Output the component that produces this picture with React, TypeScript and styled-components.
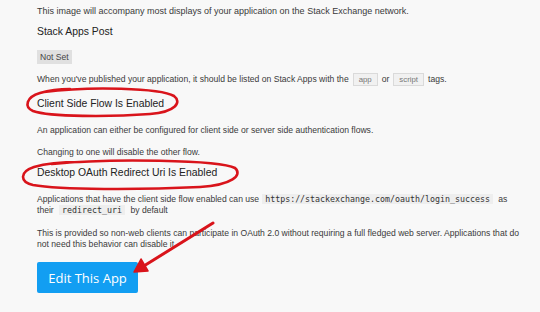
import styled, { createGlobalStyle } from "styled-components";

const Global = createGlobalStyle`
  html, body {
    margin: 0;
    padding: 0;
    background: #f8f8f8;
  }
  body {
    font-family: "Liberation Sans", Arial, sans-serif;
    color: #3a3a3a;
  }
`;

const Page = styled.div`
  position: relative;
  width: 540px;
  height: 312px;
  overflow: hidden;
  box-sizing: border-box;
  padding: 5px 0 0 37px;
`;

const Text = styled.p<{ $gap: number; $lh?: number; $size?: number }>`
  margin: ${(p) => p.$gap}px 0 0;
  font-size: ${(p) => p.$size ?? 8.6}px;
  line-height: ${(p) => p.$lh ?? 12}px;
  white-space: nowrap;
`;

const Heading = styled.h3<{ $gap: number }>`
  margin: ${(p) => p.$gap}px 0 0;
  font-size: 10.4px;
  line-height: 14px;
  font-weight: normal;
  color: #222;
`;

const Badge = styled.div`
  display: inline-block;
  margin-top: 11px;
  height: 14px;
  line-height: 14px;
  padding: 0 3px;
  font-size: 8.6px;
  color: #444;
  background: #e0e0e0;
`;

const Tag = styled.span`
  display: inline-block;
  margin: 0 4px;
  padding: 0 5px;
  height: 11px;
  line-height: 11px;
  font-size: 7.8px;
  color: #777;
  background: #f1f1f1;
  border: 1px solid #dadada;
  vertical-align: middle;
`;

const Code = styled.code`
  font-family: "DejaVu Sans Mono", "Liberation Mono", monospace;
  font-size: 8.3px;
  color: #333;
  background: #eeeeee;
  padding: 0 3px;
  margin: 0 3px;
`;

const Button = styled.button`
  display: block;
  margin-top: 12px;
  width: 101px;
  height: 31px;
  border: none;
  border-radius: 2px;
  background: #129ef2;
  color: #fff;
  font-family: "Open Sans", sans-serif;
  font-size: 13px;
  padding: 0;
`;

const Marks = styled.svg`
  position: absolute;
  left: 0;
  top: 0;
  pointer-events: none;
`;

const red = "#d9141b";

export default function App() {
  return (
    <Page>
      <Global />
      <Text $gap={0} $size={9}>
        This image will accompany most displays of your application on the Stack Exchange network.
      </Text>
      <Heading $gap={8}>Stack Apps Post</Heading>
      <Badge>Not Set</Badge>
      <Text $gap={7} $lh={16}>
        When you've published your application, it should be listed on Stack Apps with the
        <Tag>app</Tag>or<Tag>script</Tag>tags.
      </Text>
      <Heading $gap={10}>Client Side Flow Is Enabled</Heading>
      <Text $gap={13}>
        An application can either be configured for client side or server side authentication flows.
      </Text>
      <Text $gap={10}>Changing to one will disable the other flow.</Text>
      <Heading $gap={8}>Desktop OAuth Redirect Uri Is Enabled</Heading>
      <Text $gap={14} $lh={11}>
        Applications that have the client side flow enabled can use
        <Code>https://stackexchange.com/oauth/login_success</Code> as
        <br />
        their <Code>redirect_uri</Code> by default
      </Text>
      <Text $gap={12} $lh={11}>
        This is provided so non-web clients can participate in OAuth 2.0 without requiring a full fledged web server. Applications that do
        <br />
        not need this behavior can disable it.
      </Text>
      <Button>Edit This App</Button>

      <Marks width="540" height="312" viewBox="0 0 540 312">
        <g fill="none" stroke={red} strokeLinecap="round" strokeLinejoin="round">
          <path
            d="M44 92 C90 86 160 88 174 96 C182 102 176 112 150 114 C110 117 50 117 33 111 C24 107 26 97 40 93 C50 90 62 89 70 89"
            strokeWidth="2.6"
          />
          <path
            d="M52 164 C110 158 220 160 235 168 C243 175 232 185 200 187 C140 190 60 190 33 185 C20 182 19 172 34 167 C44 164 60 162 80 162"
            strokeWidth="2.6"
          />
          <path d="M213 223 L139 269" strokeWidth="3" />
        </g>
        <path d="M134 272 L141 259 L148 271 Z" fill={red} stroke={red} strokeWidth="1.5" strokeLinejoin="round" />
      </Marks>
    </Page>
  );
}
